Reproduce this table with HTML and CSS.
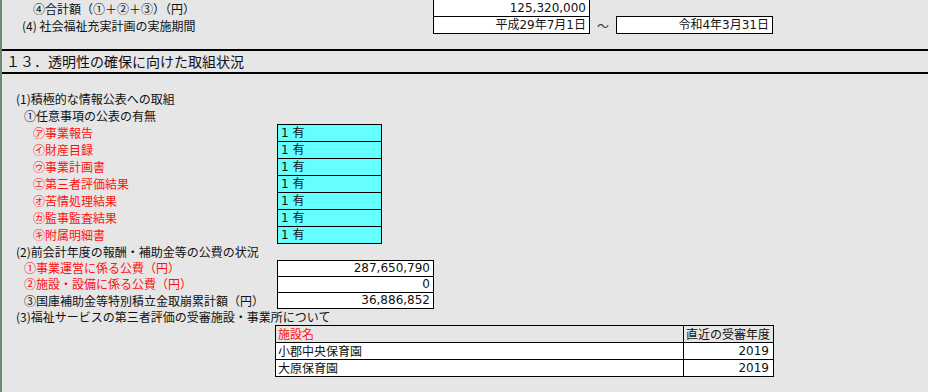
FILE: index.html
```html
<!DOCTYPE html>
<html lang="ja">
<head>
<meta charset="utf-8">
<title>透明性の確保に向けた取組状況</title>
<link rel="stylesheet" href="styles.css">
</head>
<body>
<div class="sheet">
  <div class="row h17">
    <div class="lab w431 i31">④合計額（①＋②＋③）（円）</div>
    <div class="box w157 b-lrb num">125,320,000</div>
  </div>
  <div class="row h17">
    <div class="lab w431 i20">(4) 社会福祉充実計画の実施期間</div>
    <div class="box w157 b-lrb num">平成29年7月1日</div>
    <div class="tilde">～</div>
    <div class="box w157 b-all up num">令和4年3月31日</div>
  </div>
  <div class="sp15"></div>
  <div class="title">１３．透明性の確保に向けた取組状況</div>
  <div class="sp16"></div>
  <div class="row h17"><div class="lab i14">(1)積極的な情報公表への取組</div></div>
  <div class="row h17"><div class="lab i22">①任意事項の公表の有無</div></div>

  <div class="row h17"><div class="lab w275 i31 red">㋐事業報告</div><div class="cyan">1 有</div></div>
  <div class="row h17"><div class="lab w275 i31 red">㋑財産目録</div><div class="cyan">1 有</div></div>
  <div class="row h17"><div class="lab w275 i31 red">㋒事業計画書</div><div class="cyan">1 有</div></div>
  <div class="row h17"><div class="lab w275 i31 red">㋓第三者評価結果</div><div class="cyan">1 有</div></div>
  <div class="row h17"><div class="lab w275 i31 red">㋔苦情処理結果</div><div class="cyan">1 有</div></div>
  <div class="row h17"><div class="lab w275 i31 red">㋕監事監査結果</div><div class="cyan">1 有</div></div>
  <div class="row h18"><div class="lab w275 i31 red">㋖附属明細書</div><div class="cyan last">1 有</div></div>

  <div class="row h16"><div class="lab i14">(2)前会計年度の報酬・補助金等の公費の状況</div></div>
  <div class="row h16"><div class="lab w275 i22 red">①事業運営に係る公費（円）</div><div class="white num">287,650,790</div></div>
  <div class="row h16"><div class="lab w275 i22 red">②施設・設備に係る公費（円）</div><div class="white num">0</div></div>
  <div class="row h17"><div class="lab w275 i22">③国庫補助金等特別積立金取崩累計額（円）</div><div class="white last num">36,886,852</div></div>
  <div class="row h16"><div class="lab i14">(3)福祉サービスの第三者評価の受審施設・事業所について</div></div>

  <div class="tbl">
    <div class="tc hd red">施設名</div>
    <div class="tc hd rc">直近の受審年度</div>
    <div class="tc dt">小郡中央保育園</div>
    <div class="tc dt rc num">2019</div>
    <div class="tc dt lr">大原保育園</div>
    <div class="tc dt rc lr num">2019</div>
  </div>
</div>
</body>
</html>
```

FILE: styles.css
```css
* { box-sizing: border-box; margin: 0; padding: 0; }
html, body { background: #e6e6e6; }
body {
  width: 928px;
  height: 392px;
  overflow: hidden;
  font-family: "Noto Sans CJK JP", sans-serif;
  font-size: 12px;
  color: #111;
}
.sheet {
  border-left: 2px solid #6b8a70;
  height: 392px;
}
.row { display: flex; align-items: stretch; }
.h16 { height: 16px; line-height: 16px; }
.h17 { height: 17px; line-height: 17px; }
.h18 { height: 18px; line-height: 17px; }
.lab { white-space: nowrap; }
.w431 { width: 431px; flex: none; }
.w275 { width: 275px; flex: none; }
.i14 { padding-left: 14px; }
.i20 { padding-left: 20px; }
.i22 { padding-left: 22px; }
.i31 { padding-left: 31px; }
.red { color: #ff1010; }

.num {
  font-family: "DejaVu Sans", "Noto Sans CJK JP", sans-serif;
  text-align: right;
  padding-right: 3px;
}
.box {
  background: #fff;
  border: 0 solid #000;
  line-height: 16px;
  white-space: nowrap;
}
.w157 { width: 157px; flex: none; }
.b-lrb { border-width: 0 1px 1px 1px; }
.b-all { border-width: 1px; height: 18px; margin-top: -1px; }
.tilde {
  width: 26px;
  flex: none;
  text-align: center;
  font-size: 12px;
  color: #333;
}

.sp15 { height: 15px; }
.sp16 { height: 16px; }
.title {
  border-top: 2px solid #000;
  border-bottom: 2px solid #000;
  height: 25px;
  line-height: 21px;
  font-size: 14px;
  padding-left: 4px;
  color: #111;
}

.cyan {
  width: 105px;
  flex: none;
  background: #66ffff;
  border: 1px solid #000;
  border-bottom: 0;
  line-height: 16px;
  padding-left: 3px;
  font-family: "DejaVu Sans", "Noto Sans CJK JP", sans-serif;
}
.cyan.last { border-bottom: 1px solid #000; }

.white {
  width: 157px;
  flex: none;
  background: #fff;
  border: 1px solid #000;
  border-bottom: 0;
  line-height: 15px;
}
.white.last { border-bottom: 1px solid #000; }

.tbl {
  margin-left: 273px;
  width: 499px;
  display: grid;
  grid-template-columns: 408px 91px;
  grid-auto-rows: 17px;
}
.tc {
  border-left: 1px solid #000;
  border-top: 1px solid #000;
  line-height: 16px;
  padding-left: 2px;
  white-space: nowrap;
}
.tc.rc { border-right: 1px solid #000; }
.tc.dt { background: #fff; }
.tc.lr { border-bottom: 1px solid #000; height: 18px; }
.tc.num { padding-right: 4px; }
```
